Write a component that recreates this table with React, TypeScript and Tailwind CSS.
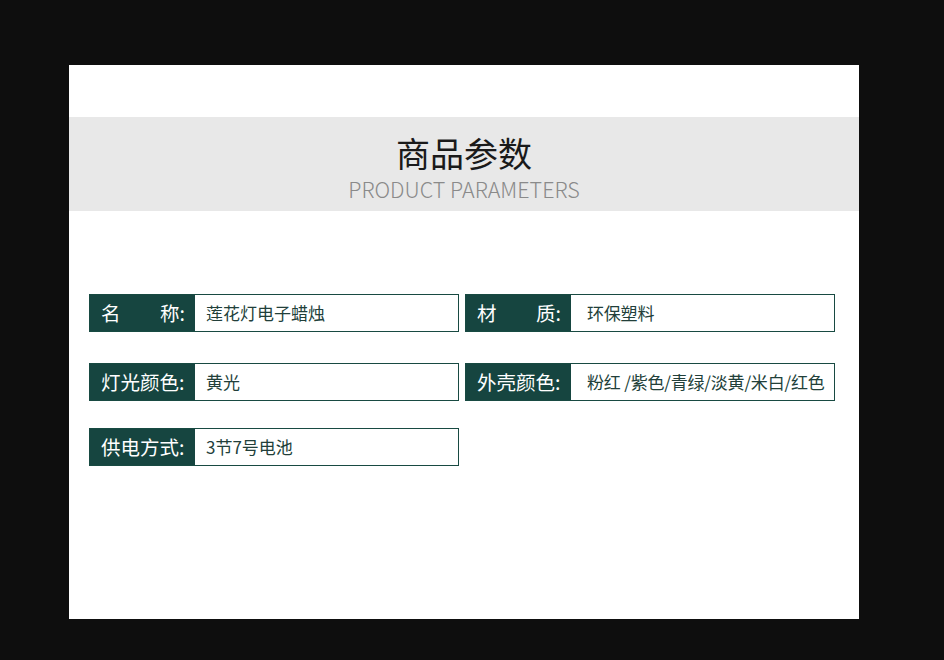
import React from 'react';

const font = { fontFamily: '"Noto Sans CJK SC", "Noto Sans", sans-serif' };

type Param = { label: React.ReactNode; value: string; wide?: boolean };

function ParamBox({ label, value, wide }: Param) {
  return (
    <div className="flex h-[38px] w-[370px] border border-[#184a42] bg-white">
      <div className="flex w-[105px] shrink-0 items-center bg-[#164540] pl-[11px] text-[19.5px] text-white">
        {label}
      </div>
      <div
        className={`flex items-center text-[17px] text-[#223f3a] ${wide ? 'pl-[16px] tracking-[-0.2px]' : 'pl-[11px]'}`}
      >
        {value}
      </div>
    </div>
  );
}

export default function App() {
  return (
    <div className="min-h-screen bg-[#0e0e0e] pt-[65px]" style={font}>
      <div className="ml-[69px] h-[554px] w-[790px] bg-white pt-[52px]">
        <div className="flex h-[94px] flex-col items-center bg-[#e8e8e8] pt-[13px]">
          <h1 className="text-[34px] leading-[45px] text-[#1a1a1a]">商品参数</h1>
          <p className="mt-[-1px] text-[21.5px] font-light leading-[30px] text-[#8a8a8a]">
            PRODUCT PARAMETERS
          </p>
        </div>

        <div className="pl-[20px] pt-[83px]">
          <div className="flex gap-[6px]">
            <ParamBox
              label={
                <span className="flex w-[84px] justify-between">
                  <span>名</span>
                  <span>称:</span>
                </span>
              }
              value="莲花灯电子蜡烛"
            />
            <ParamBox
              label={
                <span className="flex w-[84px] justify-between">
                  <span>材</span>
                  <span>质:</span>
                </span>
              }
              value="环保塑料"
              wide
            />
          </div>
          <div className="mt-[31px] flex gap-[6px]">
            <ParamBox label="灯光颜色:" value="黄光" />
            <ParamBox label="外壳颜色:" value="粉红 /紫色/青绿/淡黄/米白/红色" wide />
          </div>
          <div className="mt-[27px] flex gap-[6px]">
            <ParamBox label="供电方式:" value="3节7号电池" />
          </div>
        </div>
      </div>
    </div>
  );
}
